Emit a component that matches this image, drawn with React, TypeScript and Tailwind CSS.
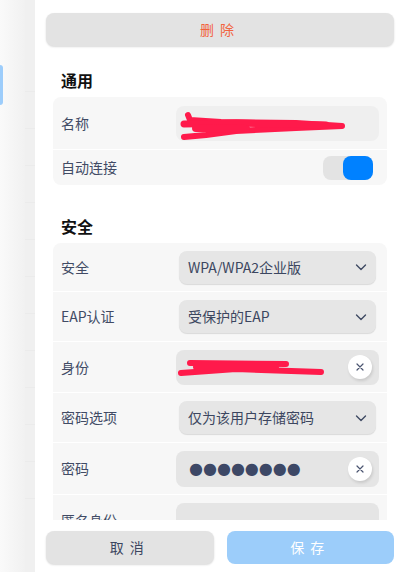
import React from 'react';

const font = { fontFamily: '"Noto Sans CJK SC", "Noto Sans", sans-serif' };

function Chevron() {
  return (
    <svg width="14" height="14" viewBox="0 0 14 14" fill="none">
      <path d="M2.5 5l4.5 4.5L11.5 5" stroke="#3f4a63" strokeWidth="1.4" strokeLinecap="round" strokeLinejoin="round" />
    </svg>
  );
}

function Select({ value }: { value: string }) {
  return (
    <div className="ml-[3px] mr-[3px] flex h-[33px] flex-1 items-center justify-between rounded-lg bg-[#e6e6e6] pl-[9px] pr-[8px] text-[14px] text-[#3c4660] shadow-[0_1px_1px_rgba(0,0,0,0.12)]">
      <span>{value}</span>
      <Chevron />
    </div>
  );
}

function ClearBtn() {
  return (
    <div className="flex h-[24px] w-[24px] items-center justify-center rounded-full bg-white shadow-[1px_2px_3px_rgba(0,0,0,0.12)]">
      <svg width="10" height="10" viewBox="0 0 10 10">
        <path d="M2 2l6 6M8 2l-6 6" stroke="#4a5470" strokeWidth="1.2" strokeLinecap="round" />
      </svg>
    </div>
  );
}

function Row({ label, children, h = 'h-[48px]' }: { label: string; children?: React.ReactNode; h?: string }) {
  return (
    <div className={`flex ${h} items-center px-2`}>
      <div className="w-[115px] shrink-0 text-[14px] text-[#414b65]">{label}</div>
      <div className="flex flex-1 items-center">{children}</div>
    </div>
  );
}

function Divider() {
  return <div className="h-px bg-white" />;
}

export default function App() {
  return (
    <div className="flex h-[572px] w-[408px] overflow-hidden bg-white" style={font}>
      {/* blurred window behind */}
      <div className="relative flex w-[35px] shrink-0">
        <div className="w-[25px] bg-gradient-to-r from-[#fafafa] to-[#f1f1f1]" />
        <div className="flex w-[10px] flex-col bg-[#f0f0f0]">
          <div className="h-[55px]" />
          {Array.from({ length: 12 }).map((_, i) => (
            <div key={i} className="h-[37px] border-b border-[#ebebeb]" />
          ))}
        </div>
        <div className="absolute left-0 top-[65px] h-[40px] w-[3px] rounded-r bg-[#9dcdfb]" />
      </div>

      <div className="flex min-w-0 flex-1 flex-col bg-white">
        <div className="h-[520px] overflow-hidden pl-[11px] pr-[14px] pt-[13px]">
          <div className="flex h-[33px] items-center justify-center rounded-lg bg-[#e3e3e3] text-[14px] tracking-[6px] text-[#f2633f] shadow-[0_1px_2px_rgba(0,0,0,0.15)]">
            删除
          </div>

          <div className="px-[7px]">
            <div className="mt-[22px] pl-2 text-[16px] font-bold leading-[24px] text-[#111]">通用</div>
            <div className="mt-[5px] rounded-lg bg-[#f7f7f7]">
              <Row label="名称" h="h-[52px]">
                <div className="relative h-[35px] flex-1 rounded-lg bg-[#efefef]">
                  <svg className="absolute left-0 top-0" width="203" height="35" viewBox="0 0 203 35">
                    <path d="M12 9 L14 14 L45 16 L120 17 L166 20 L120 22 L60 25 L30 29 L8 31" stroke="#ff1a4b" strokeWidth="6" fill="none" strokeLinecap="round" strokeLinejoin="round" />
                    <path d="M8 18 L60 17 L150 19" stroke="#ff1a4b" strokeWidth="7" fill="none" strokeLinecap="round" />
                    <path d="M20 22 L70 23" stroke="#ff1a4b" strokeWidth="8" fill="none" strokeLinecap="round" />
                  </svg>
                </div>
              </Row>
              <Divider />
              <Row label="自动连接" h="h-[35px]">
                <div className="ml-auto mr-[6px] flex h-[24px] w-[50px] justify-end rounded-lg bg-[#e3e3e3]">
                  <div className="h-[24px] w-[30px] rounded-lg bg-[#0081ff]" />
                </div>
              </Row>
            </div>

            <div className="mt-[29px] pl-2 text-[16px] font-bold leading-[24px] text-[#111]">安全</div>
            <div className="mt-[5px] rounded-lg bg-[#f7f7f7]">
              <Row label="安全" h="h-[48px]">
                <Select value="WPA/WPA2企业版" />
              </Row>
              <Divider />
              <Row label="EAP认证" h="h-[49px]">
                <Select value="受保护的EAP" />
              </Row>
              <Divider />
              <Row label="身份" h="h-[50px]">
                <div className="relative flex h-[35px] flex-1 items-center justify-end rounded-lg bg-[#e5e5e5] pr-[7px]">
                  <svg className="absolute left-0 top-0" width="160" height="35" viewBox="0 0 160 35">
                    <path d="M14 13 L110 14" stroke="#ff1a4b" strokeWidth="6" fill="none" strokeLinecap="round" />
                    <path d="M5 23 L60 19 L145 22" stroke="#ff1a4b" strokeWidth="6" fill="none" strokeLinecap="round" strokeLinejoin="round" />
                    <path d="M20 17 L100 17" stroke="#ff1a4b" strokeWidth="6" fill="none" strokeLinecap="round" />
                  </svg>
                  <ClearBtn />
                </div>
              </Row>
              <Divider />
              <Row label="密码选项" h="h-[49px]">
                <Select value="仅为该用户存储密码" />
              </Row>
              <Divider />
              <Row label="密码" h="h-[51px]">
                <div className="flex h-[36px] flex-1 items-center justify-between rounded-lg bg-[#e5e5e5] pl-[13px] pr-[7px]">
                  <span className="text-[16px] text-[#3d4866]" style={{ fontFamily: '"DejaVu Sans", sans-serif' }}>
                    ●●●●●●●●
                  </span>
                  <ClearBtn />
                </div>
              </Row>
              <Divider />
              <Row label="匿名身份" h="h-[50px]">
                <div className="h-[35px] flex-1 rounded-lg bg-[#e5e5e5]" />
              </Row>
            </div>
          </div>
        </div>

        <div className="flex gap-[13px] pl-[11px] pr-[14px] pt-[11px]">
          <div className="flex h-[33px] flex-1 items-center justify-center rounded-lg bg-[#e3e3e3] text-[14px] tracking-[6px] text-[#3c4660] shadow-[0_1px_2px_rgba(0,0,0,0.15)]">
            取消
          </div>
          <div className="flex h-[33px] flex-1 items-center justify-center rounded-lg bg-[#9ccdfa] text-[14px] tracking-[6px] text-white">
            保存
          </div>
        </div>
      </div>
    </div>
  );
}
